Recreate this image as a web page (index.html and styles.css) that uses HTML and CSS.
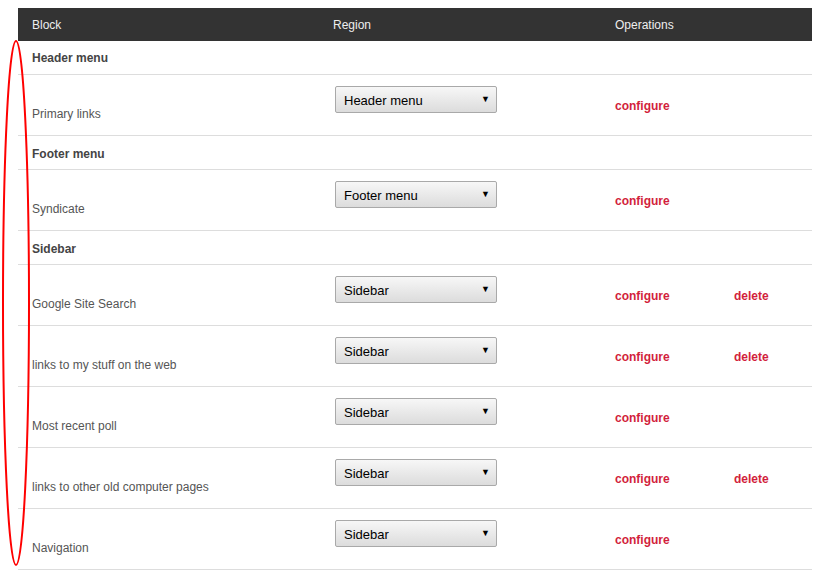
FILE: index.html
```html
<!DOCTYPE html>
<html lang="en">
<head>
    <meta charset="UTF-8">
    <title>Blocks</title>
    <link rel="stylesheet" href="styles.css">
</head>
<body>
    <div class="page">
        <table class="blocks">
            <colgroup>
                <col class="col-block">
                <col class="col-region">
                <col class="col-op">
                <col class="col-op2">
            </colgroup>
            <thead>
                <tr>
                    <th>Block</th>
                    <th>Region</th>
                    <th colspan="2">Operations</th>
                </tr>
            </thead>
            <tbody>
                <tr class="region-row"><td colspan="4">Header menu</td></tr>
                <tr class="block-row">
                    <td class="name">Primary links</td>
                    <td class="region"><div class="select">Header menu<span class="arrow">&#9660;</span></div></td>
                    <td class="op"><a href="#">configure</a></td>
                    <td class="op"></td>
                </tr>
                <tr class="region-row"><td colspan="4">Footer menu</td></tr>
                <tr class="block-row">
                    <td class="name">Syndicate</td>
                    <td class="region"><div class="select">Footer menu<span class="arrow">&#9660;</span></div></td>
                    <td class="op"><a href="#">configure</a></td>
                    <td class="op"></td>
                </tr>
                <tr class="region-row"><td colspan="4">Sidebar</td></tr>
                <tr class="block-row">
                    <td class="name">Google Site Search</td>
                    <td class="region"><div class="select">Sidebar<span class="arrow">&#9660;</span></div></td>
                    <td class="op"><a href="#">configure</a></td>
                    <td class="op"><a href="#">delete</a></td>
                </tr>
                <tr class="block-row">
                    <td class="name">links to my stuff on the web</td>
                    <td class="region"><div class="select">Sidebar<span class="arrow">&#9660;</span></div></td>
                    <td class="op"><a href="#">configure</a></td>
                    <td class="op"><a href="#">delete</a></td>
                </tr>
                <tr class="block-row">
                    <td class="name">Most recent poll</td>
                    <td class="region"><div class="select">Sidebar<span class="arrow">&#9660;</span></div></td>
                    <td class="op"><a href="#">configure</a></td>
                    <td class="op"></td>
                </tr>
                <tr class="block-row">
                    <td class="name">links to other old computer pages</td>
                    <td class="region"><div class="select">Sidebar<span class="arrow">&#9660;</span></div></td>
                    <td class="op"><a href="#">configure</a></td>
                    <td class="op"><a href="#">delete</a></td>
                </tr>
                <tr class="block-row">
                    <td class="name">Navigation</td>
                    <td class="region"><div class="select">Sidebar<span class="arrow">&#9660;</span></div></td>
                    <td class="op"><a href="#">configure</a></td>
                    <td class="op"></td>
                </tr>
            </tbody>
        </table>

        <!-- hand-drawn highlight over the drag column -->
        <svg class="mark" width="40" height="540" viewBox="0 0 40 540">
            <ellipse cx="16" cy="270" rx="13" ry="262" fill="none" stroke="#ff0000" stroke-width="2"/>
        </svg>
    </div>
</body>
</html>
```

FILE: styles.css
```css
* {
    margin: 0;
    padding: 0;
    box-sizing: border-box;
}

html, body {
    background-color: #fff;
    font-family: "Liberation Sans", Arial, sans-serif;
}

.page {
    position: relative;
    padding: 8px 0 0 18px;
}

.blocks {
    width: 794px;
    border-collapse: collapse;
    table-layout: fixed;
    font-size: 12px;
    line-height: 14px;
}

.col-block { width: 301px; }
.col-region { width: 282px; }
.col-op { width: 119px; }
.col-op2 { width: 92px; }

.blocks thead th {
    background-color: #333;
    color: #eee;
    font-weight: normal;
    text-align: left;
    height: 33px;
    padding: 1px 14px 0;
    font-size: 12px;
}

.blocks td {
    border-bottom: 1px solid #ddd;
    vertical-align: top;
    padding-left: 14px;
}

.region-row td {
    height: 34px;
    padding-top: 11px;
    font-weight: bold;
    color: #444;
}

.blocks tbody tr:first-child td {
    height: 33px;
    padding-top: 10px;
}

.block-row td {
    height: 61px;
}

.block-row .name {
    padding-top: 32px;
    color: #555;
}

.block-row .region {
    padding-top: 11px;
    padding-left: 16px;
}

.block-row .op {
    padding-top: 24px;
}

.op a {
    color: #d21f3c;
    font-weight: bold;
    text-decoration: none;
}

.select {
    position: relative;
    width: 162px;
    height: 27px;
    padding: 6px 0 0 8px;
    border: 1px solid #a9a9a9;
    border-radius: 2px;
    background: linear-gradient(#f7f7f7, #dcdcdc);
    color: #000;
    font-size: 13px;
    line-height: 15px;
}

.arrow {
    position: absolute;
    right: 6px;
    top: 7px;
    font-size: 9px;
    line-height: 10px;
}

.mark {
    position: absolute;
    left: 0;
    top: 33px;
}
```
